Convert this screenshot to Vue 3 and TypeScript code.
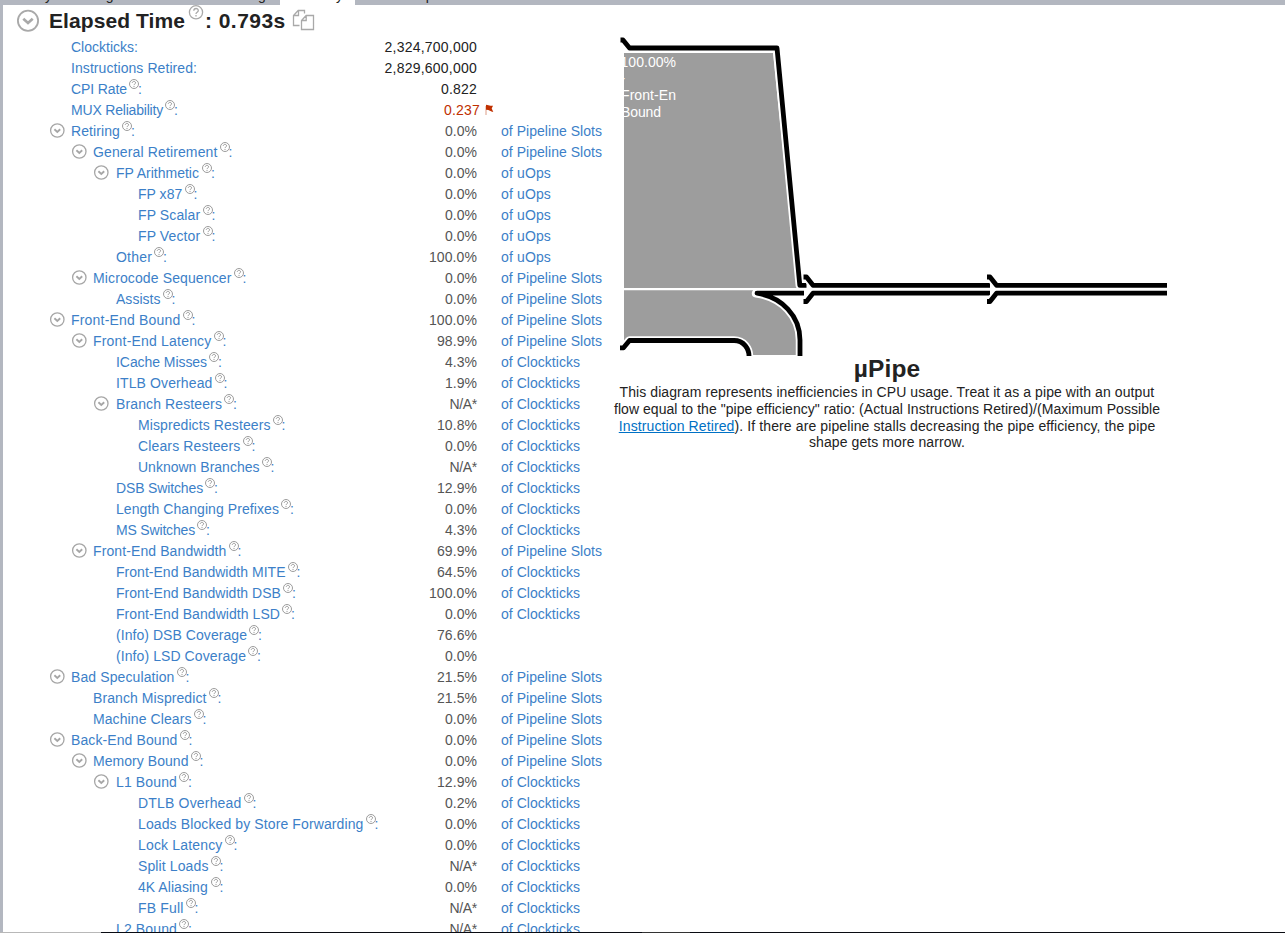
<script setup lang="ts">
interface Metric {
  label: string
  level: number
  /** horizontal centre of the help mark, or end of the label when there is none */
  end: number
  value: string
  unit: string
  open?: boolean
  plain?: boolean
  kind?: 'dark' | 'alert'
}

const P = 'of Pipeline Slots'
const C = 'of Clockticks'
const U = 'of uOps'

const metrics: Metric[] = [
  { label: 'Clockticks', level: 0, end: 134, value: '2,324,700,000', unit: '', plain: true, kind: 'dark' },
  { label: 'Instructions Retired', level: 0, end: 193, value: '2,829,600,000', unit: '', plain: true, kind: 'dark' },
  { label: 'CPI Rate', level: 0, end: 134.5, value: '0.822', unit: '', kind: 'dark' },
  { label: 'MUX Reliability', level: 0, end: 170.5, value: '0.237', unit: '', kind: 'alert' },
  { label: 'Retiring', level: 0, end: 127.5, value: '0.0%', unit: P, open: true },
  { label: 'General Retirement', level: 1, end: 225, value: '0.0%', unit: P, open: true },
  { label: 'FP Arithmetic', level: 2, end: 207.5, value: '0.0%', unit: U, open: true },
  { label: 'FP x87', level: 3, end: 190, value: '0.0%', unit: U },
  { label: 'FP Scalar', level: 3, end: 208, value: '0.0%', unit: U },
  { label: 'FP Vector', level: 3, end: 208, value: '0.0%', unit: U },
  { label: 'Other', level: 2, end: 159.5, value: '100.0%', unit: U },
  { label: 'Microcode Sequencer', level: 1, end: 239, value: '0.0%', unit: P, open: true },
  { label: 'Assists', level: 2, end: 168, value: '0.0%', unit: P },
  { label: 'Front-End Bound', level: 0, end: 188, value: '100.0%', unit: P, open: true },
  { label: 'Front-End Latency', level: 1, end: 219, value: '98.9%', unit: P, open: true },
  { label: 'ICache Misses', level: 2, end: 214.5, value: '4.3%', unit: C },
  { label: 'ITLB Overhead', level: 2, end: 220, value: '1.9%', unit: C },
  { label: 'Branch Resteers', level: 2, end: 229.5, value: 'N/A*', unit: C, open: true },
  { label: 'Mispredicts Resteers', level: 3, end: 278, value: '10.8%', unit: C },
  { label: 'Clears Resteers', level: 3, end: 248, value: '0.0%', unit: C },
  { label: 'Unknown Branches', level: 3, end: 267, value: 'N/A*', unit: C },
  { label: 'DSB Switches', level: 2, end: 210.5, value: '12.9%', unit: C },
  { label: 'Length Changing Prefixes', level: 2, end: 286.5, value: '0.0%', unit: C },
  { label: 'MS Switches', level: 2, end: 202.5, value: '4.3%', unit: C },
  { label: 'Front-End Bandwidth', level: 1, end: 234, value: '69.9%', unit: P, open: true },
  { label: 'Front-End Bandwidth MITE', level: 2, end: 293, value: '64.5%', unit: C },
  { label: 'Front-End Bandwidth DSB', level: 2, end: 288.5, value: '100.0%', unit: C },
  { label: 'Front-End Bandwidth LSD', level: 2, end: 287.5, value: '0.0%', unit: C },
  { label: '(Info) DSB Coverage', level: 2, end: 254.5, value: '76.6%', unit: '' },
  { label: '(Info) LSD Coverage', level: 2, end: 253.5, value: '0.0%', unit: '' },
  { label: 'Bad Speculation', level: 0, end: 182, value: '21.5%', unit: P, open: true },
  { label: 'Branch Mispredict', level: 1, end: 214, value: '21.5%', unit: P },
  { label: 'Machine Clears', level: 1, end: 199, value: '0.0%', unit: P },
  { label: 'Back-End Bound', level: 0, end: 185, value: '0.0%', unit: P, open: true },
  { label: 'Memory Bound', level: 1, end: 196, value: '0.0%', unit: P, open: true },
  { label: 'L1 Bound', level: 2, end: 184.5, value: '12.9%', unit: C, open: true },
  { label: 'DTLB Overhead', level: 3, end: 249, value: '0.2%', unit: C },
  { label: 'Loads Blocked by Store Forwarding', level: 3, end: 371, value: '0.0%', unit: C },
  { label: 'Lock Latency', level: 3, end: 230, value: '0.0%', unit: C },
  { label: 'Split Loads', level: 3, end: 216, value: 'N/A*', unit: C },
  { label: '4K Aliasing', level: 3, end: 216, value: '0.0%', unit: C },
  { label: 'FB Full', level: 3, end: 191, value: 'N/A*', unit: C },
  { label: 'L2 Bound', level: 2, end: 184.5, value: 'N/A*', unit: C },
]

const starts = [71, 93, 116, 138]
const pen = document.createElement('canvas').getContext('2d')!

function fit(text: string, width: number, font = '14px "Liberation Sans"') {
  pen.font = font
  const gap = (width - pen.measureText(text).width) / text.length
  return { width: `${width}px`, letterSpacing: `${gap.toFixed(3)}px` }
}

const rows = metrics.map((m) => ({
  ...m,
  labelStyle: fit(m.label, m.end - (m.plain ? 0 : 7.5) - starts[m.level]),
  valueStyle: fit(m.value, m.value.startsWith('2,') ? 92.5 : { 4: m.value === 'N/A*' ? 27.5 : 32, 5: m.value.endsWith('%') ? 40 : 36, 6: 48 }[m.value.length] ?? 32),
  unitStyle: m.unit ? fit(m.unit, m.unit === P ? 101 : m.unit === C ? 79 : 50) : {},
}))

const tabs = [
  { name: 'Analysis Configuration', width: 160 },
  { name: 'Collection Log', width: 117 },
  { name: 'Summary', width: 75, active: true },
  { name: 'Bottom-up', width: 90 },
]
const about = [
  { before: 'This diagram represents inefficiencies in CPU usage. Treat it as a pipe with an output', link: '', after: '', width: 535 },
  { before: 'flow equal to the "pipe efficiency" ratio: (Actual Instructions Retired)/(Maximum Possible', link: '', after: '', width: 546 },
  { before: '', link: 'Instruction Retired', after: '). If there are pipeline stalls decreasing the pipe efficiency, the pipe', width: 536.5 },
  { before: 'shape gets more narrow.', link: '', after: '', width: 156 },
].map((l) => ({ ...l, style: fit(l.before + l.link + l.after, l.width) }))
</script>

<template>
  <div class="window">
    <div class="tabs">
      <div v-for="t in tabs" :key="t.name" class="tab" :class="{ active: t.active }" :style="{ width: t.width + 'px' }">
        <span>{{ t.name }}</span>
      </div>
    </div>
    <main class="content">
      <section class="summary">
        <header class="title">
          <svg class="toggle-big" width="24" height="24" viewBox="0 0 24 24">
            <circle cx="12" cy="11.8" r="10.1" />
            <path d="M7.3 9.7l4.7 4.3 4.7-4.3" />
          </svg>
          <h1>Elapsed Time</h1>
          <svg class="help-big" width="16" height="16" viewBox="0 0 16 16">
            <circle cx="8" cy="7.3" r="6.6" />
            <path d="M5.8 5.7C5.8 2.8 10.3 2.8 10.3 5.5C10.3 7.3 8 7.1 8 8.9M8 10.1v1.5" />
          </svg>
          <span class="elapsed">: 0.793s</span>
          <svg class="copy" width="23" height="22" viewBox="0 0 23 22">
            <path d="M12.5 4.5V1.5H6.2L1.5 6.5v10H7.5M6.5 1.5v5h-5M21.5 6.5H14.2L9.5 11.5v9h12zM14.2 6.5v5H9.5" />
          </svg>
        </header>
        <div v-for="r in rows" :key="r.label" class="row">
          <div class="name" :class="'level' + r.level">
            <span class="toggle-slot">
              <svg v-if="r.open" width="16" height="16" viewBox="0 0 16 16">
                <circle cx="8.3" cy="7.5" r="6.7" />
                <path d="M5.4 6.3L8.3 8.9l2.9-2.6" />
              </svg>
            </span>
            <span class="label" :style="r.labelStyle">{{ r.label }}</span>
            <svg v-if="!r.plain" class="help" width="14" height="12" viewBox="0 0 14 12">
              <circle cx="7" cy="6" r="4.5" />
              <path d="M5.3 4.9C5.3 2.9 8.6 3 8.6 4.8C8.6 6 7 6 7 7.1M7 8v1" />
            </svg>
            <span class="colon">:</span>
          </div>
          <div class="value" :class="r.kind">
            <span :style="r.valueStyle">{{ r.value }}</span>
            <svg v-if="r.kind === 'alert'" width="9" height="12" viewBox="0 0 9 12">
              <path class="pole" d="M1 2v9" />
              <path d="M1 .8c2 0 3 1 4.5 1H8L6.7 4.6 8.3 8C5.5 8 4.5 5.7 1 5.8z" />
            </svg>
          </div>
          <div class="unit" :style="r.unitStyle">{{ r.unit }}</div>
        </div>
      </section>
      <section class="pipe">
        <svg class="diagram" width="560" height="321" viewBox="614 35 560 321">
          <path class="fill" d="M624 53H773L797 288H624z" />
          <path class="fill" d="M624 290.3H756C782 295 798 316 798 340V355H751C749 346 743 338 734 338H629L624 344z" />
          <path class="halo" d="M799.8 285.3L777 48H629" />
          <path class="halo" d="M804 293.2H756C782 297 800 316 800 340V356" />
          <path class="halo" d="M621 347.8H623.5L629.5 340.5H734C744 340.5 749 349 749 356" />
          <path class="wall" d="M620.5 40H623L629.5 48H777L799.8 285.3H806.5" />
          <path class="wall" d="M804 293.2H757C782 297 800 316 800 340V356" />
          <path class="wall" d="M620 347.8H623.5L629.5 340.5H734C744 340.5 749 349 749 356" />
          <path class="cut" d="M805.5 277H806.5L813 285.3M805.5 301.5H806.5L813 293.2" />
          <path class="wall" d="M803.5 277H806.5L813 285.3H990M803.5 301.5H806.5L813 293.2H990" />
          <path class="cut" d="M989 277H990L996.5 285.3M989 301.5H990L996.5 293.2" />
          <path class="wall" d="M987 277H990L996.5 285.3H1167M987 301.5H990L996.5 293.2H1167" />
          <g class="caption">
            <text x="620.5" y="67" textLength="55.5">100.00%</text>
            <text x="620.5" y="83">-</text>
            <text x="621" y="100" textLength="55">Front-En</text>
            <text x="621" y="117" textLength="40">Bound</text>
          </g>
        </svg>
        <h2>µPipe</h2>
        <p>
          <span v-for="(l, i) in about" :key="i" class="line" :style="l.style">{{ l.before }}<a v-if="l.link">{{ l.link }}</a>{{ l.after }}</span>
        </p>
      </section>
    </main>
    <footer class="edge"><i class="left"></i><i class="thumb"></i></footer>
  </div>
</template>

<style>
body { margin: 0; overflow: hidden; }
</style>

<style scoped>
.window {
  box-sizing: border-box;
  width: 1285px;
  height: 933px;
  display: flex;
  flex-direction: column;
  overflow: hidden;
  background: #fff;
  color: #222;
  font: 14px/21px "Liberation Sans", Arial, sans-serif;
}
svg { fill: none; flex: none; }
.tabs { height: 5px; flex: none; display: flex; background: #b3b7c0; padding-left: 3px; overflow: hidden; }
.tab { box-sizing: border-box; height: 5px; padding-left: 14px; overflow: hidden; display: flex; align-items: flex-end; }
.tab span { white-space: nowrap; line-height: 20px; font-size: 14px; }
.tab.active { background: #fff; padding-left: 3px; }
.tab.active + .tab { padding-left: 14px; }
.content { flex: 1; min-height: 0; display: flex; border-left: 3px solid #b3b7c0; overflow: hidden; }
.summary { width: 611px; flex: none; }
.title { height: 32px; display: flex; color: #222; padding-left: 13px; }
h1, .elapsed { margin: 0; font-size: 21px; line-height: 32px; font-weight: bold; white-space: nowrap; }
h1 { width: 139px; letter-spacing: 0.08px; }
.elapsed { width: 87px; margin-left: 1px; letter-spacing: 0.45px; }
.toggle-big { margin: 4px 9px 0 0; stroke: #a9a9a9; stroke-width: 1.8; }
.toggle-big path { stroke-width: 2.7; }
.help-big { stroke: #a9a9a9; stroke-width: 1.3; }
.copy { stroke: #a9a9a9; stroke-width: 1.3; margin-top: 4px; }
.row { height: 21px; display: flex; white-space: nowrap; }
.name { box-sizing: border-box; width: 378px; display: flex; color: #3c7fc8; flex: none; }
.level0 { padding-left: 46px; }
.level1 { padding-left: 68px; }
.level2 { padding-left: 91px; }
.level3 { padding-left: 113px; }
.toggle-slot { width: 22px; height: 21px; flex: none; stroke: #a6a6a6; stroke-width: 1.3; }
.toggle-slot svg { display: block; margin: 2px 0 0 0; }
.level2 .toggle-slot svg { margin-left: -1px; }
.toggle-slot path { stroke-width: 1.9; }
.label { flex: none; }
.help { stroke: #9c9c9c; stroke-width: 1; margin: -1.5px -3px 0 0; }
.value { position: relative; width: 96px; flex: none; display: flex; justify-content: flex-end; color: #555; }
.value.dark { color: #222; }
.value.alert { color: #c03000; left: 3px; }
.value svg { position: absolute; left: 101px; top: 4px; fill: #c03000; }
.value .pole { stroke: #dc9c85; }
.unit { margin-left: 24px; color: #3c7fc8; }
.pipe { width: 546px; padding-top: 30px; }
.diagram { display: block; }
.fill { fill: #9d9d9d; }
.halo { stroke: #fff; stroke-width: 8.5; stroke-linejoin: round; stroke-linecap: round; }
.cut { stroke: #fff; stroke-width: 8.5; }
.wall { stroke: #000; stroke-width: 4.8; stroke-linejoin: round; }
.caption { fill: #fff; font-size: 14px; }
h2 { margin: 0; height: 28px; font-size: 24.5px; line-height: 26px; text-align: center; letter-spacing: 0.15px; }
p { margin: 0; line-height: 16.8px; color: #222; }
.line { display: block; margin: 0 auto; white-space: nowrap; }
a { color: #0071c5; text-decoration: underline; }
.edge { height: 1px; flex: none; display: flex; background: #090b12; }
.edge .left { width: 101px; background: #b8b8b8; }
.edge .thumb { width: 48px; margin-left: 541px; background: #333; }
</style>
